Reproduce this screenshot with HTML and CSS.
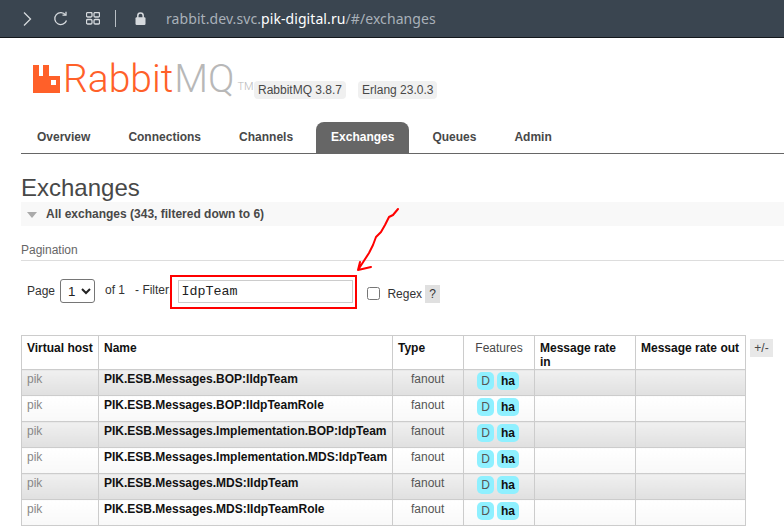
FILE: index.html
```html
<!DOCTYPE html>
<html>
<head>
    <meta charset="utf-8">
    <title>RabbitMQ Management</title>
    <link rel="stylesheet" href="styles.css">
</head>
<body>
    <div class="toolbar">
        <svg class="ico ico-next" width="10" height="16" viewBox="0 0 10 16"><path d="M2 1.5 L8.5 8 L2 14.5" /></svg>
        <svg class="ico ico-reload" width="15" height="16" viewBox="0 0 15 16"><path d="M12.6 4 A6 6 0 1 0 13.5 9.5" /><path d="M9.5 4.2 H13 V0.8" /></svg>
        <svg class="ico ico-tabs" width="14" height="13" viewBox="0 0 14 13"><rect x="0.5" y="0.5" width="5.5" height="4.5" rx="1.2" /><rect x="8" y="0.5" width="5.5" height="4.5" rx="1.2" /><rect x="0.5" y="7.5" width="5.5" height="4.5" rx="1.2" /><rect x="8" y="7.5" width="5.5" height="4.5" rx="1.2" /></svg>
        <div class="divider"></div>
        <svg class="ico-lock" width="11" height="13" viewBox="0 0 11 13"><path class="shackle" d="M2.8 6 V3.8 A2.7 2.7 0 0 1 8.2 3.8 V6" /><rect x="0.5" y="5.2" width="10" height="7.8" rx="1.2" /></svg>
        <div class="url">rabbit.dev.svc.<span class="host">pik-digital.ru</span>/#/exchanges</div>
    </div>

    <div class="page">
        <div class="header">
            <div class="logo">
                <svg class="logo-mark" width="27" height="28" viewBox="0 0 27 28"><path d="M0 0 H6 V11 H10 V0 H16 V11 H27 V28 H0 Z M18 15 V20 H23 V15 Z" fill-rule="evenodd" /></svg>
                <span class="logo-rabbit">Rabbit</span><span class="logo-mq">MQ</span><span class="logo-tm">TM</span>
            </div>
            <span class="version">RabbitMQ 3.8.7</span>
            <span class="version">Erlang 23.0.3</span>
        </div>

        <ul class="tabs">
            <li>Overview</li>
            <li>Connections</li>
            <li>Channels</li>
            <li class="active">Exchanges</li>
            <li>Queues</li>
            <li>Admin</li>
        </ul>

        <h1>Exchanges</h1>
        <div class="section-head"><span class="triangle"></span>All exchanges (343, filtered down to 6)</div>

        <h3>Pagination</h3>
        <div class="filter-row">
            <span class="lbl-page">Page</span>
            <select class="page-select"><option>1</option></select>
            <span class="lbl-of">of 1</span>
            <span class="lbl-filter">- Filter:</span>
            <div class="filter-box">
                <input class="filter-input" type="text" value="IdpTeam">
                <div class="red-box"></div>
            </div>
            <input class="regex-check" type="checkbox">
            <span class="lbl-regex">Regex</span>
            <span class="help">?</span>
        </div>

        <div class="table-wrap">
            <table>
                <thead>
                    <tr>
                        <th class="c-vhost">Virtual host</th>
                        <th class="c-name">Name</th>
                        <th class="c-type">Type</th>
                        <th class="c-feat">Features</th>
                        <th class="c-in">Message rate in</th>
                        <th class="c-out">Message rate out</th>
                    </tr>
                </thead>
                <tbody>
                    <tr class="alt1"><td class="vhost">pik</td><td class="name">PIK.ESB.Messages.BOP:IIdpTeam</td><td class="type">fanout</td><td class="feat"><span class="badge">D</span><span class="badge ha">ha</span></td><td></td><td></td></tr>
                    <tr class="alt2"><td class="vhost">pik</td><td class="name">PIK.ESB.Messages.BOP:IIdpTeamRole</td><td class="type">fanout</td><td class="feat"><span class="badge">D</span><span class="badge ha">ha</span></td><td></td><td></td></tr>
                    <tr class="alt1"><td class="vhost">pik</td><td class="name">PIK.ESB.Messages.Implementation.BOP:IdpTeam</td><td class="type">fanout</td><td class="feat"><span class="badge">D</span><span class="badge ha">ha</span></td><td></td><td></td></tr>
                    <tr class="alt2"><td class="vhost">pik</td><td class="name">PIK.ESB.Messages.Implementation.MDS:IdpTeam</td><td class="type">fanout</td><td class="feat"><span class="badge">D</span><span class="badge ha">ha</span></td><td></td><td></td></tr>
                    <tr class="alt1"><td class="vhost">pik</td><td class="name">PIK.ESB.Messages.MDS:IIdpTeam</td><td class="type">fanout</td><td class="feat"><span class="badge">D</span><span class="badge ha">ha</span></td><td></td><td></td></tr>
                    <tr class="alt2"><td class="vhost">pik</td><td class="name">PIK.ESB.Messages.MDS:IIdpTeamRole</td><td class="type">fanout</td><td class="feat"><span class="badge">D</span><span class="badge ha">ha</span></td><td></td><td></td></tr>
                </tbody>
            </table>
            <span class="plus-minus">+/-</span>
        </div>
    </div>

    <!-- hand drawn arrow on top of the screenshot -->
    <svg class="arrow" width="60" height="80" viewBox="0 0 60 80">
        <path d="M49 9 L44 15 L40 17 L36 25 L32 32 L27 37 L24 45 L20 53 L9 70 M9 70 L11 62 M9 70 L22 67" />
    </svg>
</body>
</html>
```

FILE: styles.css
```css
html, body {
    margin: 0;
    padding: 0;
}
body {
    position: relative;
    height: 532px;
    overflow: hidden;
    background: #fff;
    font-family: "Liberation Sans", Arial, sans-serif;
    font-size: 12px;
    color: #484848;
}

/* browser bar */
.toolbar {
    display: flex;
    align-items: center;
    box-sizing: border-box;
    height: 38px;
    padding-left: 22px;
    background: #3a4550;
    border-bottom: 1px solid #14181c;
}
.ico {
    flex: none;
    fill: none;
    stroke: #d5d9dd;
    stroke-width: 1.3;
}
.ico-reload {
    margin-left: 21px;
}
.ico-tabs {
    margin-left: 18px;
}
.divider {
    width: 1px;
    height: 17px;
    margin-left: 15px;
    background: #b9bfc5;
}
.ico-lock {
    flex: none;
    margin-left: 19px;
    fill: #d5d9dd;
}
.ico-lock .shackle {
    fill: none;
    stroke: #d5d9dd;
    stroke-width: 1.5;
}
.url {
    margin-left: 20px;
    font-family: "Noto Sans", sans-serif;
    font-size: 14px;
    letter-spacing: 0.08px;
    color: #a9b1b9;
}
.url .host {
    color: #fff;
}

.page {
    padding: 0 0 0 21px;
}

/* logo row */
.header {
    display: flex;
    align-items: flex-end;
    height: 61px;
    padding-left: 12px;
}
.logo {
    display: flex;
    align-items: flex-end;
    height: 40px;
    width: 221px;
    line-height: 40px;
    font-family: "Roboto", sans-serif;
    font-weight: 300;
    font-size: 39px;
}
.logo-mark {
    flex: none;
    margin: 0 3px 6px 0;
    fill: #ff6029;
}
.logo-rabbit {
    color: #ff6029;
}
.logo-mq {
    margin-left: 1px;
    color: #b8b8b8;
}
.logo-tm {
    margin: 0 0 0 3px;
    font-size: 11px;
    line-height: 24px;
    color: #b8b8b8;
}
.version {
    margin: 0 12px 0 0;
    padding: 2px 4px;
    background: #f0f0f0;
    border-radius: 4px;
    line-height: 14px;
    color: #484848;
}

/* tabs */
.tabs {
    display: flex;
    height: 31px;
    margin: 23px 0 0;
    padding: 0 0 0 1px;
    list-style: none;
    border-bottom: 1px solid #666;
    font-weight: bold;
}
.tabs li {
    margin-right: 8px;
    padding: 0 15px;
    line-height: 31px;
}
.tabs li.active {
    background: #666;
    color: #fff;
    border-radius: 8px 8px 0 0;
}

h1 {
    margin: 20px 0 0;
    font-size: 24px;
    font-weight: normal;
    line-height: 28px;
    color: #484848;
}

.section-head {
    display: flex;
    align-items: center;
    height: 24px;
    background: #f8f8f8;
    font-weight: bold;
}
.triangle {
    width: 0;
    height: 0;
    margin: 2px 9px 0 6px;
    border-left: 5.5px solid transparent;
    border-right: 5.5px solid transparent;
    border-top: 6px solid #aaa;
}

h3 {
    margin: 17px 0 0;
    padding-bottom: 2px;
    border-bottom: 1px solid #ddd;
    font-size: 12px;
    font-weight: normal;
    line-height: 15px;
    color: #666;
}

/* pagination and filter */
.filter-row {
    display: flex;
    align-items: center;
    height: 24px;
    margin-top: 18px;
    padding-left: 6px;
    color: #333;
}
.page-select {
    width: 35px;
    height: 24px;
    margin-left: 5px;
    padding: 0 0 0 3px;
    background: #fff;
    border: 1px solid #767676;
    border-radius: 3px;
    font-family: "Liberation Sans", sans-serif;
    font-size: 13.33px;
    color: #222;
}
.lbl-of {
    margin: -2px 0 0 10px;
}
.lbl-filter {
    margin: -2px 0 0 10px;
}
.filter-box {
    position: relative;
    margin-left: 6px;
}
.filter-input {
    display: block;
    box-sizing: border-box;
    width: 175px;
    height: 23px;
    padding: 0 2px;
    border: 1px solid #ccc;
    font-family: "Liberation Mono", monospace;
    font-size: 13.33px;
    color: #222;
    outline: none;
}
.red-box {
    position: absolute;
    left: -8px;
    top: -5px;
    width: 183px;
    height: 30px;
    border: 2px solid #f00;
}
.regex-check {
    width: 13px;
    height: 13px;
    margin: 5px 0 0 14px;
}
.lbl-regex {
    margin: 6px 0 0 7px;
}
.help {
    width: 15px;
    height: 18px;
    margin: 6px 0 0 3px;
    background: #e0e0e0;
    line-height: 18px;
    text-align: center;
}

/* table */
.table-wrap {
    display: flex;
    align-items: flex-start;
    margin-top: 32px;
}
table {
    flex: none;
    width: 725px;
    table-layout: fixed;
    border-collapse: collapse;
    font-size: 12px;
}
th, td {
    box-sizing: border-box;
    padding: 0 5px;
    border: 1px solid #ccc;
    vertical-align: top;
    line-height: 14px;
}
th {
    height: 24px;
    padding-top: 5px;
    background: #fff;
    text-align: left;
    color: #111;
}
td {
    height: 26px;
    padding-top: 2px;
}
.c-vhost { width: 77px; }
.c-name { width: 294px; }
.c-type { width: 71px; }
.c-feat { width: 71px; font-weight: normal; color: #484848; text-align: center; }
.c-in { width: 101px; }
.c-out { width: 110px; }

tr.alt1 td {
    background: linear-gradient(#f0f0f0, #e0e0e0);
}
tr.alt2 td {
    background: linear-gradient(#fff, #f8f8f8);
}
.vhost {
    color: #888;
}
.name {
    font-weight: bold;
    color: #111;
}
.type {
    padding-left: 18px;
    color: #555;
}
td.feat {
    padding: 2px 0 0 13px;
}
.badge {
    display: inline-block;
    min-width: 17px;
    height: 18px;
    margin-right: 3px;
    background: #8ff0ff;
    border-radius: 5px;
    line-height: 18px;
    text-align: center;
    color: #555;
}
.badge.ha {
    min-width: 22px;
    font-weight: bold;
    color: #111;
}
.plus-minus {
    width: 23px;
    height: 18px;
    margin: 4px 0 0 4px;
    background: #e8e8e8;
    line-height: 18px;
    text-align: center;
}

.arrow {
    position: absolute;
    left: 349px;
    top: 200px;
    fill: none;
    stroke: #f00;
    stroke-width: 2;
    stroke-linecap: round;
    stroke-linejoin: round;
}
```
